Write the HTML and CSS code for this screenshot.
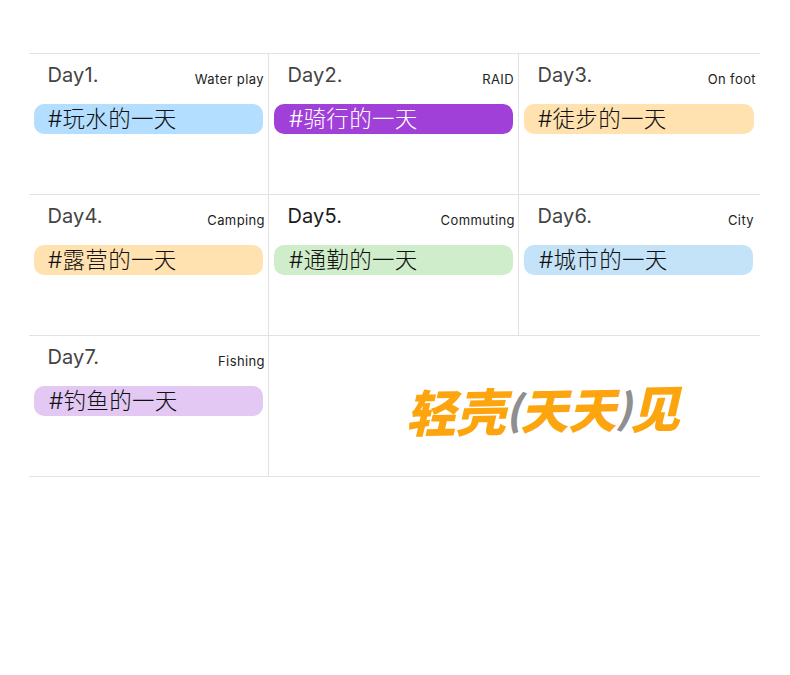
FILE: index.html
```html
<!DOCTYPE html>
<html lang="zh-CN">
<head>
<meta charset="utf-8">
<title>Days</title>
<link rel="stylesheet" href="styles.css">
</head>
<body>
<main class="board">
  <section class="cell col-a">
    <header class="head"><h2 class="day">Day1.</h2><span class="cap cap-1">Water play</span></header>
    <p class="pill blue"><span>#玩水的一天</span></p>
  </section>
  <section class="cell col-b">
    <header class="head"><h2 class="day">Day2.</h2><span class="cap cap-2">RAID</span></header>
    <p class="pill purple"><span>#骑行的一天</span></p>
  </section>
  <section class="cell col-c">
    <header class="head"><h2 class="day">Day3.</h2><span class="cap cap-3">On foot</span></header>
    <p class="pill amber wide"><span>#徒步的一天</span></p>
  </section>
  <section class="cell col-a">
    <header class="head"><h2 class="day">Day4.</h2><span class="cap cap-4">Camping</span></header>
    <p class="pill amber"><span>#露营的一天</span></p>
  </section>
  <section class="cell col-b">
    <header class="head"><h2 class="day dark">Day5.</h2><span class="cap cap-5">Commuting</span></header>
    <p class="pill green"><span>#通勤的一天</span></p>
  </section>
  <section class="cell col-c">
    <header class="head"><h2 class="day">Day6.</h2><span class="cap cap-6">City</span></header>
    <p class="pill sky"><span>#城市的一天</span></p>
  </section>
  <section class="cell col-a">
    <header class="head"><h2 class="day">Day7.</h2><span class="cap cap-4">Fishing</span></header>
    <p class="pill lilac"><span>#钓鱼的一天</span></p>
  </section>
  <section class="cell logo-cell">
    <div class="logo"><span class="tall">轻壳</span><span class="paren">(</span><span>天天</span><span class="paren">)</span><span class="tall">见</span></div>
  </section>
</main>
</body>
</html>
```
FILE: styles.css
```css
* { box-sizing: border-box; }
html, body { margin: 0; background: #fff; }
body {
  min-height: 675px;
  padding: 53px 30px 0 29px;
  font-family: Inter, "Noto Sans CJK SC", sans-serif;
  color: #222;
}
.board {
  display: grid;
  grid-template-columns: 240px 250px 241px;
  grid-auto-rows: 141px;
  border-bottom: 1px solid #e2e2e2;
  height: 424px;
}
.cell {
  border-top: 1px solid #e2e2e2;
  padding-top: 7px;
  min-width: 0;
}
.col-a { padding-left: 5px; border-right: 1px solid #e2e2e2; }
.col-b { padding-left: 5px; border-right: 1px solid #e2e2e2; }
.col-c { padding-left: 5px; }
.head {
  display: flex;
  justify-content: space-between;
  height: 43px;
  padding-left: 14px;
}
.day {
  margin: 0 0 0 -0.5px;
  font-size: 20px;
  font-weight: 400;
  letter-spacing: 0.1px;
  line-height: 28px;
  color: #444;
}
.day.dark { color: #1c1c1c; }
.cap {
  font-size: 13px;
  line-height: 16px;
  margin-top: 10px;
  letter-spacing: 0.4px;
  color: #222;
}
.cap-1 { margin-right: 4px; }
.cap-2 { margin-right: 4px; }
.cap-3 { margin-right: 4px; }
.cap-4 { margin-right: 3px; }
.cap-5 { margin-right: 3px; }
.cap-6 { margin-right: 6px; }
.pill {
  margin: 0 5px 0 0;
  height: 30px;
  border-radius: 10px;
  padding-left: 14px;
  font-size: 22.5px;
  line-height: 30px;
  font-family: Inter, "Noto Sans CJK SC", sans-serif;
  font-weight: 300;
  letter-spacing: 0.3px;
  color: #111;
  white-space: nowrap;
}
.col-c .pill { margin-right: 7px; }
.col-c .pill.wide { margin-right: 6px; }
.blue { background: #b3deff; }
.purple { background: #a040d8; color: #fff; }
.amber { background: #ffe2b0; }
.green { background: #cfedca; padding-left: 15px; }
.sky { background: #c4e3f8; padding-left: 15px; }
.lilac { background: #e2c8f2; padding-left: 15px; }
.purple { padding-left: 15px; }
.logo-cell {
  grid-column: 2 / 4;
  padding: 0;
  display: flex;
  align-items: center;
  justify-content: center;
}
.logo {
  display: flex;
  align-items: center;
  margin: 4px 0 0 68px;
  font-family: "Noto Sans CJK SC", sans-serif;
  font-weight: 900;
  font-size: 48px;
  line-height: 52px;
  color: #fda50f;
  transform: rotate(-1deg) skewX(-14deg);
  white-space: nowrap;
}
.paren { color: #8f8f8f; font-size: 40px; margin: 0 -1px; }
.tall { font-size: 50px; }
```
